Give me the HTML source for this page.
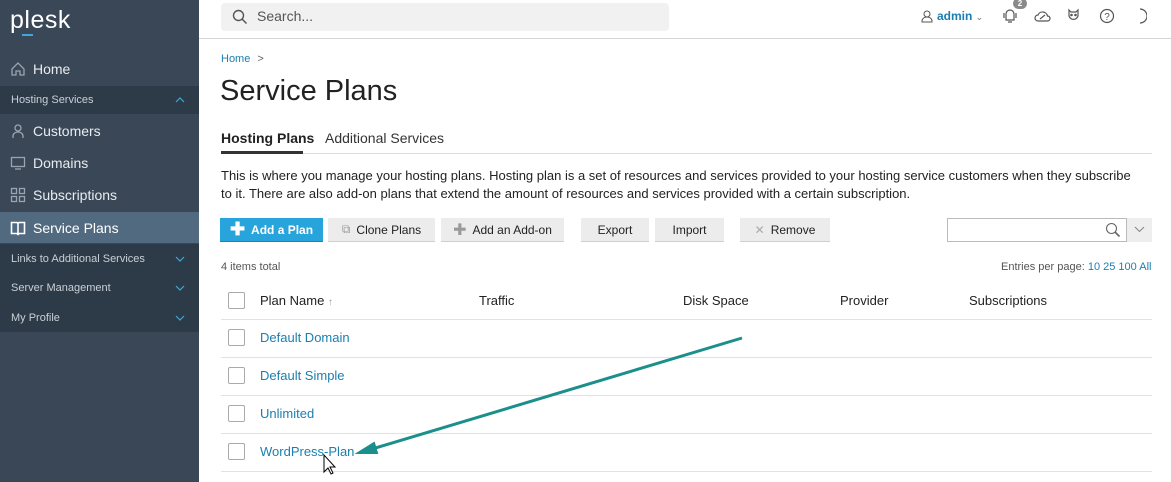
<!DOCTYPE html>
<html><head><style>
*{box-sizing:border-box;margin:0;padding:0}
body{width:1171px;height:482px;overflow:hidden;font-family:"Liberation Sans",sans-serif;background:#fff;position:relative;color:#222}
.sb{position:absolute;left:0;top:0;width:199px;height:482px;background:#3a4756}
.sb .it{position:absolute;left:0;width:199px;color:#e8ecef;font-size:14px;display:flex;align-items:center;padding-left:33px}
.sb .sec{position:absolute;left:0;width:199px;background:#2d3a48;color:#c9d0d6;font-size:11px;padding-left:11px;display:flex;align-items:center}
.sb .car{position:absolute;right:14px;top:50%;margin-top:-4px}
.ic{position:absolute;left:10px}
.a{position:absolute;white-space:nowrap}
.btn{position:absolute;top:218px;height:24px;background:#ececec;border-bottom:1px solid #cfcfcf;font-size:12px;color:#222;display:flex;align-items:center;justify-content:center}
.ln{position:absolute;left:221px;width:931px;height:1px;background:#e2e2e2}
.cb{position:absolute;left:228px;width:17px;height:17px;border:1px solid #aaa;border-radius:2px;background:#fff}
.lk{position:absolute;left:260px;font-size:13px;color:#1a7fb0}
.th{position:absolute;top:293px;font-size:13px;color:#222}
</style></head><body>
<div class="sb">
 <div class="a" style="left:10px;top:6px;font-size:25px;color:#fff;letter-spacing:0.5px">plesk</div>
 <div class="a" style="left:22px;top:34px;width:11px;height:2px;background:#3fa7d9"></div>
 <div class="it" style="top:58px;height:22px">Home</div>
 <svg class="ic" style="top:61px" width="16" height="16" viewBox="0 0 16 16"><path d="M2 8L8 2l6 6v6H10V10H6v4H2z" fill="none" stroke="#9aa5b0" stroke-width="1.3"/></svg>
 <div class="sec" style="top:86px;height:28px">Hosting Services<svg class="car" width="10" height="8" viewBox="0 0 10 8"><path d="M1 6l4-4 4 4" fill="none" stroke="#3fa7d9" stroke-width="1.2"/></svg></div>
 <div class="it" style="top:120px;height:22px">Customers</div>
 <svg class="ic" style="top:123px" width="16" height="16" viewBox="0 0 16 16"><circle cx="8" cy="5" r="3" fill="none" stroke="#9aa5b0" stroke-width="1.3"/><path d="M3 15v-2a5 4 0 0 1 10 0v2" fill="none" stroke="#9aa5b0" stroke-width="1.3"/></svg>
 <div class="it" style="top:152px;height:22px">Domains</div>
 <svg class="ic" style="top:155px" width="16" height="16" viewBox="0 0 16 16"><rect x="1.5" y="2.5" width="13" height="9" fill="none" stroke="#9aa5b0" stroke-width="1.3"/><path d="M5 14h6" stroke="#9aa5b0" stroke-width="1.3"/></svg>
 <div class="it" style="top:184px;height:22px">Subscriptions</div>
 <svg class="ic" style="top:187px" width="16" height="16" viewBox="0 0 16 16"><g fill="none" stroke="#9aa5b0" stroke-width="1.3"><rect x="1.5" y="1.5" width="5" height="5"/><rect x="9.5" y="1.5" width="5" height="5"/><rect x="1.5" y="9.5" width="5" height="5"/><rect x="9.5" y="9.5" width="5" height="5"/></g></svg>
 <div class="it" style="top:212px;height:31px;background:#526a80;color:#fff">Service Plans</div>
 <svg class="ic" style="top:220px" width="16" height="16" viewBox="0 0 16 16"><path d="M1.5 2.5h5.5l1 1 1-1h5.5v11H9l-1 1-1-1H1.5z M8 3.5v11" fill="none" stroke="#fff" stroke-width="1.6"/></svg>
 <div class="sec" style="top:244px;height:29px">Links to Additional Services<svg class="car" width="10" height="8" viewBox="0 0 10 8"><path d="M1 2l4 4 4-4" fill="none" stroke="#3fa7d9" stroke-width="1.2"/></svg></div>
 <div class="sec" style="top:273px;height:30px">Server Management<svg class="car" width="10" height="8" viewBox="0 0 10 8"><path d="M1 2l4 4 4-4" fill="none" stroke="#3fa7d9" stroke-width="1.2"/></svg></div>
 <div class="sec" style="top:303px;height:29px">My Profile<svg class="car" width="10" height="8" viewBox="0 0 10 8"><path d="M1 2l4 4 4-4" fill="none" stroke="#3fa7d9" stroke-width="1.2"/></svg></div>
</div>
<div class="a" style="left:199px;top:38px;width:972px;height:1px;background:#d4d4d4"></div>
<div class="a" style="left:221px;top:3px;width:448px;height:28px;background:#f1f1f1;border-radius:4px"></div>
<svg class="a" style="left:232px;top:9px" width="16" height="16" viewBox="0 0 16 16"><circle cx="6.5" cy="6.5" r="5" fill="none" stroke="#555" stroke-width="1.4"/><path d="M10 10l4.5 4.5" stroke="#555" stroke-width="1.5"/></svg>
<div class="a" style="left:257px;top:8px;font-size:14px;color:#555">Search...</div>
<svg class="a" style="left:921px;top:10px" width="12" height="13" viewBox="0 0 12 13"><circle cx="6" cy="4" r="3" fill="none" stroke="#555"/><path d="M1 12v-1a5 4 0 0 1 10 0v1z" fill="none" stroke="#555"/></svg>
<div class="a" style="left:937px;top:9px;font-size:12px;color:#1a7fb0;font-weight:bold">admin <span style="color:#777;font-weight:normal;font-size:9px">⌄</span></div>
<svg class="a" style="left:1001px;top:8px" width="18" height="16" viewBox="0 0 18 16"><path d="M5 12V6a4 4 0 0 1 8 0v6zM3 5v5M15 5v5M7 14h4" fill="none" stroke="#555" stroke-width="1.2"/></svg>
<div class="a" style="left:1013px;top:-2px;width:14px;height:11px;border-radius:6px;background:#8a8a8a;color:#fff;font-size:8px;text-align:center;line-height:11px;font-weight:bold">2</div>
<svg class="a" style="left:1034px;top:9px" width="17" height="13" viewBox="0 0 17 13"><path d="M4 12a3 3 0 0 1 0-6 5 5 0 0 1 9.5 1 2.5 2.5 0 0 1 0 5zM6 10l5-4" fill="none" stroke="#555" stroke-width="1.2"/></svg>
<svg class="a" style="left:1066px;top:8px" width="15" height="16" viewBox="0 0 15 16"><path d="M3 2l2 2h5l2-2v6a5 6 0 0 1-9 0z" fill="none" stroke="#555" stroke-width="1.2"/><circle cx="5.5" cy="7" r="1.3" fill="#555"/><circle cx="9.5" cy="7" r="1.3" fill="#555"/></svg>
<svg class="a" style="left:1099px;top:8px" width="16" height="16" viewBox="0 0 16 16"><circle cx="8" cy="8" r="6.5" fill="none" stroke="#555" stroke-width="1.2"/><text x="8" y="12" font-size="10" text-anchor="middle" fill="#555" font-family="Liberation Sans">?</text></svg>
<svg class="a" style="left:1133px;top:8px" width="14" height="16" viewBox="0 0 14 16"><path d="M5 1a7 7 0 0 1 0 14 6 6 0 0 0 0-14" fill="none" stroke="#555" stroke-width="1.2" transform="translate(2,0)"/></svg>

<div class="a" style="left:221px;top:53px;font-size:11px;color:#1a7fb0">Home <span style="color:#666;margin-left:4px">&gt;</span></div>
<div class="a" style="left:220px;top:75px;font-size:29px;color:#222">Service Plans</div>
<div class="a" style="left:221px;top:130px;font-size:14px;color:#222;font-weight:bold">Hosting Plans</div>
<div class="a" style="left:325px;top:130px;font-size:14px;color:#333">Additional Services</div>
<div class="a" style="left:221px;top:153px;width:931px;height:1px;background:#ddd"></div>
<div class="a" style="left:221px;top:151px;width:82px;height:3px;background:#333"></div>
<div class="a" style="left:221px;top:167px;width:924px;font-size:13px;line-height:18px;color:#222;white-space:normal">This is where you manage your hosting plans. Hosting plan is a set of resources and services provided to your hosting service customers when they subscribe to it. There are also add-on plans that extend the amount of resources and services provided with a certain subscription.</div>

<div class="btn" style="left:220px;width:103px;background:#28a4dc;border-bottom-color:#1c86b7;color:#fff;font-weight:bold"><span style="font-size:18px;margin-right:6px">✚</span>Add a Plan</div>
<div class="btn" style="left:328px;width:107px"><span style="color:#999;margin-right:6px">⧉</span>Clone Plans</div>
<div class="btn" style="left:441px;width:123px"><span style="color:#999;margin-right:6px;font-size:16px">✚</span>Add an Add-on</div>
<div class="btn" style="left:581px;width:68px">Export</div>
<div class="btn" style="left:655px;width:69px">Import</div>
<div class="btn" style="left:740px;width:90px"><span style="color:#aaa;margin-right:6px">✕</span>Remove</div>
<div class="a" style="left:947px;top:218px;width:180px;height:24px;border:1px solid #bbb;background:#fff"></div>
<svg class="a" style="left:1105px;top:222px" width="16" height="16" viewBox="0 0 16 16"><circle cx="6.5" cy="6.5" r="5" fill="none" stroke="#666" stroke-width="1.1"/><path d="M10 10l4.5 4.5" stroke="#666" stroke-width="1.6"/></svg>
<div class="a" style="left:1127px;top:218px;width:25px;height:24px;background:#eee"></div>
<svg class="a" style="left:1134px;top:226px" width="11" height="7" viewBox="0 0 11 7"><path d="M1 1l4.5 4.5L10 1" fill="none" stroke="#888" stroke-width="1.1"/></svg>

<div class="a" style="left:221px;top:261px;font-size:11px;color:#555">4 items total</div>
<div class="a" style="left:1001px;top:261px;font-size:11px;color:#555">Entries per page: <span style="color:#1a7fb0">10 25 100 All</span></div>

<div class="cb" style="top:292px"></div>
<div class="th" style="left:260px">Plan Name <span style="color:#999;font-size:10px">↑</span></div>
<div class="th" style="left:479px">Traffic</div>
<div class="th" style="left:683px">Disk Space</div>
<div class="th" style="left:840px">Provider</div>
<div class="th" style="left:969px">Subscriptions</div>
<div class="ln" style="top:319px"></div>
<div class="cb" style="top:329px"></div><div class="lk" style="top:330px">Default Domain</div>
<div class="ln" style="top:357px"></div>
<div class="cb" style="top:367px"></div><div class="lk" style="top:368px">Default Simple</div>
<div class="ln" style="top:395px"></div>
<div class="cb" style="top:405px"></div><div class="lk" style="top:406px">Unlimited</div>
<div class="ln" style="top:433px"></div>
<div class="cb" style="top:443px"></div><div class="lk" style="top:444px">WordPress-Plan</div>
<div class="ln" style="top:471px"></div>
<svg class="a" style="left:0;top:0" width="1171" height="482"><line x1="742" y1="338" x2="372" y2="449" stroke="#1b8f8c" stroke-width="3"/><path d="M358 453l16-10 3 10z" fill="#1b8f8c" stroke="#1b8f8c" stroke-width="2"/><path d="M324 455v17l4-4 3 6 2-1-3-6h5z" fill="#fff" stroke="#000" stroke-width="1"/></svg>
</body></html>
